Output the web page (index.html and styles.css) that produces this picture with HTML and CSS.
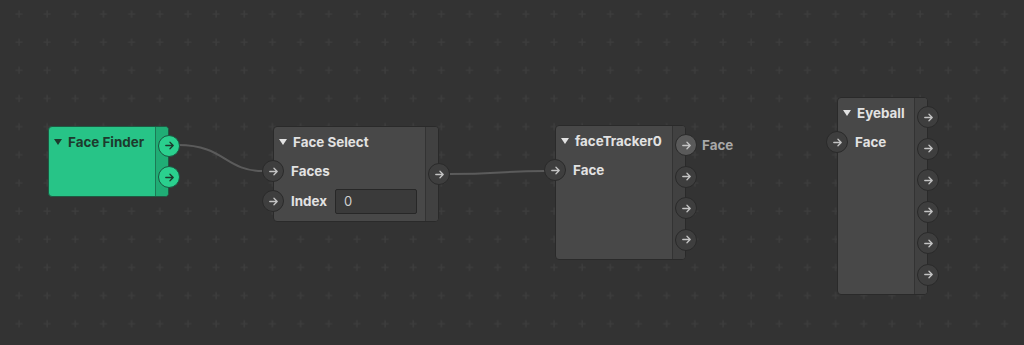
FILE: index.html
```html
<!DOCTYPE html>
<html lang="en">
<head>
  <meta charset="UTF-8">
  <title>Node Graph</title>
  <link rel="stylesheet" href="styles.css">
</head>
<body>
  <div class="canvas">
    <svg class="wires" width="1024" height="345">
      <defs>
        <pattern id="grid" x="15" y="10" width="28.16" height="28.16" patternUnits="userSpaceOnUse">
          <path d="M4 0.5v7M0.5 4h7" stroke="#3d3d3d" stroke-width="1.4"/>
        </pattern>
      </defs>
      <rect width="1024" height="345" fill="url(#grid)"/>
      <path d="M178 145 C225 145, 225 171, 263 171" class="wire"/>
      <path d="M449 174 C500 174, 500 171, 545 171" class="wire"/>
    </svg>

    <div class="node green n-finder">
      <div class="body">
        <div class="title"><span class="caret"></span>Face Finder</div>
      </div>
      <div class="strip"></div>
      <div class="outs">
        <span class="port"><svg viewBox="0 0 14 14"><path d="M3 7h8M7.5 3.5L11 7l-3.5 3.5"/></svg></span>
        <span class="port"><svg viewBox="0 0 14 14"><path d="M3 7h8M7.5 3.5L11 7l-3.5 3.5"/></svg></span>
      </div>
    </div>

    <div class="node n-select">
      <div class="body">
        <div class="title"><span class="caret"></span>Face Select</div>
        <div class="row">
          <span class="port in"><svg viewBox="0 0 14 14"><path d="M3 7h8M7.5 3.5L11 7l-3.5 3.5"/></svg></span>
          Faces
        </div>
        <div class="row">
          <span class="port in"><svg viewBox="0 0 14 14"><path d="M3 7h8M7.5 3.5L11 7l-3.5 3.5"/></svg></span>
          Index
          <input class="field" type="text" value="0">
        </div>
      </div>
      <div class="strip"></div>
      <div class="outs">
        <span class="port"><svg viewBox="0 0 14 14"><path d="M3 7h8M7.5 3.5L11 7l-3.5 3.5"/></svg></span>
      </div>
    </div>

    <div class="node n-tracker">
      <div class="body">
        <div class="title"><span class="caret"></span>faceTracker0</div>
        <div class="row">
          <span class="port in"><svg viewBox="0 0 14 14"><path d="M3 7h8M7.5 3.5L11 7l-3.5 3.5"/></svg></span>
          Face
        </div>
      </div>
      <div class="strip"></div>
      <div class="outs">
        <span class="port hot"><svg viewBox="0 0 14 14"><path d="M3 7h8M7.5 3.5L11 7l-3.5 3.5"/></svg><em class="hint">Face</em></span>
        <span class="port"><svg viewBox="0 0 14 14"><path d="M3 7h8M7.5 3.5L11 7l-3.5 3.5"/></svg></span>
        <span class="port"><svg viewBox="0 0 14 14"><path d="M3 7h8M7.5 3.5L11 7l-3.5 3.5"/></svg></span>
        <span class="port"><svg viewBox="0 0 14 14"><path d="M3 7h8M7.5 3.5L11 7l-3.5 3.5"/></svg></span>
      </div>
    </div>

    <div class="node n-eyeball">
      <div class="body">
        <div class="title"><span class="caret"></span>Eyeball</div>
        <div class="row">
          <span class="port in"><svg viewBox="0 0 14 14"><path d="M3 7h8M7.5 3.5L11 7l-3.5 3.5"/></svg></span>
          Face
        </div>
      </div>
      <div class="strip"></div>
      <div class="outs">
        <span class="port"><svg viewBox="0 0 14 14"><path d="M3 7h8M7.5 3.5L11 7l-3.5 3.5"/></svg></span>
        <span class="port"><svg viewBox="0 0 14 14"><path d="M3 7h8M7.5 3.5L11 7l-3.5 3.5"/></svg></span>
        <span class="port"><svg viewBox="0 0 14 14"><path d="M3 7h8M7.5 3.5L11 7l-3.5 3.5"/></svg></span>
        <span class="port"><svg viewBox="0 0 14 14"><path d="M3 7h8M7.5 3.5L11 7l-3.5 3.5"/></svg></span>
        <span class="port"><svg viewBox="0 0 14 14"><path d="M3 7h8M7.5 3.5L11 7l-3.5 3.5"/></svg></span>
        <span class="port"><svg viewBox="0 0 14 14"><path d="M3 7h8M7.5 3.5L11 7l-3.5 3.5"/></svg></span>
      </div>
    </div>
  </div>
</body>
</html>
```

FILE: styles.css
```css
html, body {
  margin: 0;
  padding: 0;
  background: #333333;
  overflow: hidden;
}
.canvas {
  position: relative;
  width: 1024px;
  height: 345px;
  font-family: Inter, "Noto Sans", sans-serif;
  font-size: 13.4px;
  font-weight: 700;
  color: #e2e2e2;
}
.wires {
  position: absolute;
  left: 0;
  top: 0;
}
.wire {
  fill: none;
  stroke: #5b5b5b;
  stroke-width: 2;
}

/* nodes */
.node {
  position: absolute;
  display: flex;
  box-sizing: border-box;
  border: 1px solid #2a2a2a;
  border-radius: 4px;
  background: #484848;
}
.node .body {
  flex: 1;
  display: flex;
  flex-direction: column;
}
.node .strip {
  width: 12px;
  background: #414141;
  border-left: 1px solid #333;
  border-radius: 0 3px 3px 0;
}
.title {
  height: 29px;
  display: flex;
  align-items: center;
  padding-left: 5px;
}
.caret {
  width: 0;
  height: 0;
  border-left: 4px solid transparent;
  border-right: 4px solid transparent;
  border-top: 6px solid currentColor;
  margin-right: 6px;
}
.row {
  position: relative;
  height: 30px;
  display: flex;
  align-items: center;
  padding-left: 17px;
}
.field {
  box-sizing: border-box;
  width: 82px;
  height: 25px;
  margin-left: 8px;
  padding: 0 8px;
  background: #3a3a3a;
  border: 1px solid #272727;
  border-radius: 2px;
  color: #cfcfcf;
  font: 400 13px Inter, "Noto Sans", sans-serif;
}

/* ports */
.outs {
  position: absolute;
  top: 0;
  bottom: 0;
  right: -12px;
  display: flex;
  flex-direction: column;
  justify-content: center;
  gap: 9.5px;
}
.port {
  position: relative;
  box-sizing: border-box;
  width: 22px;
  height: 22px;
  border-radius: 50%;
  border: 1.5px solid #2a2a2a;
  background: #3e3e3e;
  display: flex;
  align-items: center;
  justify-content: center;
}
.port svg {
  width: 13px;
  height: 13px;
  fill: none;
  stroke: #c4c4c4;
  stroke-width: 1.4;
  stroke-linecap: round;
  stroke-linejoin: round;
}
.port.in {
  position: absolute;
  left: -12px;
  top: 4px;
}
.port.hot {
  background: #5a5a5a;
}
.hint {
  position: absolute;
  left: 26px;
  font-style: normal;
  color: #a8a8a8;
}

/* green node */
.node.green {
  background: #27c487;
  border-color: #1e5a42;
  color: #1d3a2d;
}
.node.green .strip {
  background: #20ad75;
  border-left-color: #1c7a55;
}
.node.green .port {
  background: #2ad08e;
  border-color: #1b5640;
}
.node.green .port svg {
  stroke: #1d3a2d;
}

.n-finder {
  left: 48px;
  top: 126px;
  width: 121px;
  height: 71px;
}
.n-finder .title {
  height: 30px;
}
.n-select {
  left: 273px;
  top: 126px;
  width: 166px;
  height: 96px;
}
.n-tracker {
  left: 555px;
  top: 125px;
  width: 131px;
  height: 135px;
}
.n-eyeball {
  left: 837px;
  top: 97px;
  width: 91px;
  height: 198px;
}
```
